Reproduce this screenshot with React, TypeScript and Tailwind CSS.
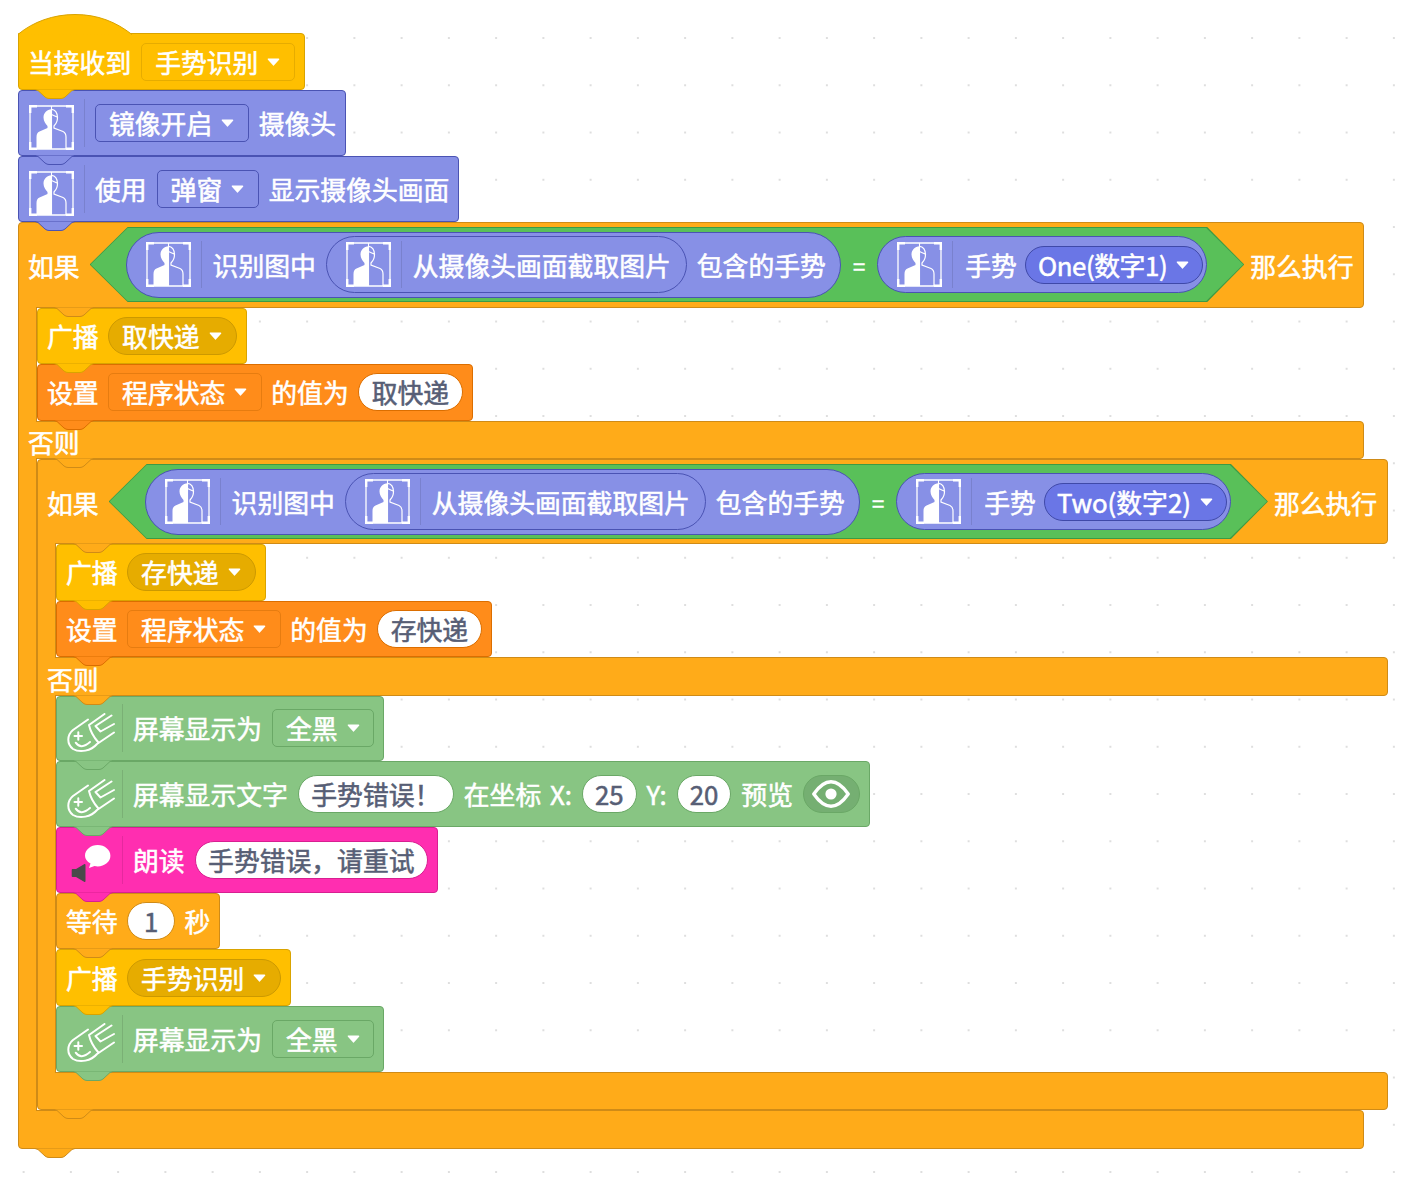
import React from 'react';

type Tone = 'event' | 'control' | 'data' | 'camera' | 'screen' | 'speech';

const tones: Record<Tone, { box: string; fill: string; line: string; drop: string; pill: string }> = {
  event: { box: 'bg-[#ffbf00] border-[#d9a300]', fill: 'fill-[#ffbf00]', line: 'stroke-[#d9a300]', drop: 'bg-[#ffbf00] border-[#e6ac00]', pill: 'border-[#cc9900]' },
  control: { box: 'bg-[#ffab19] border-[#cf8b17]', fill: 'fill-[#ffab19]', line: 'stroke-[#cf8b17]', drop: 'bg-[#ffab19] border-[#cf8b17]', pill: 'border-[#cf8b17]' },
  data: { box: 'bg-[#ff8c1a] border-[#db6e00]', fill: 'fill-[#ff8c1a]', line: 'stroke-[#db6e00]', drop: 'bg-[#ff8c1a] border-[#e67c10]', pill: 'border-[#db6e00]' },
  camera: { box: 'bg-[#8790e6] border-[#4a53b3]', fill: 'fill-[#8790e6]', line: 'stroke-[#4a53b3]', drop: 'bg-[#8790e6] border-[#4a53b3]', pill: 'border-[#4a53b3]' },
  screen: { box: 'bg-[#88c583] border-[#6aa866]', fill: 'fill-[#88c583]', line: 'stroke-[#6aa866]', drop: 'bg-[#88c583] border-[#6aa866]', pill: 'border-[#6aa866]' },
  speech: { box: 'bg-[#ff2eb0] border-[#d81f91]', fill: 'fill-[#ff2eb0]', line: 'stroke-[#d81f91]', drop: 'bg-[#ff2eb0] border-[#d81f91]', pill: 'border-[#d81f91]' },
};

const Tab: React.FC<{ tone: Tone; at?: string }> = ({ tone, at = 'left-[16px]' }) => (
  <svg width="40" height="11" viewBox="0 0 40 11" className={`absolute top-full z-10 ${at}`}>
    <path d="M0 0.5 L3 1.5 L10 8 Q12 9.5 14 9.5 H26 Q28 9.5 30 8 L37 1.5 L40 0.5" className={`${tones[tone].fill} ${tones[tone].line}`} strokeWidth="1" />
  </svg>
);

const Arrow = () => (
  <svg width="13" height="8" viewBox="0 0 13 8" className="shrink-0">
    <path d="M1.5 1.2 H11.5 L6.5 6.8 Z" fill="#fff" stroke="#fff" strokeWidth="1.6" strokeLinejoin="round" />
  </svg>
);

const Drop: React.FC<{ tone: Tone; label: string }> = ({ tone, label }) => (
  <div className={`flex items-center shrink-0 h-[38px] pl-[13px] pr-[13.5px] gap-[9px] rounded-[5px] border ${tones[tone].drop}`}>
    <span>{label}</span>
    <Arrow />
  </div>
);

const BroadcastPill: React.FC<{ label: string }> = ({ label }) => (
  <div className="flex items-center shrink-0 h-[38px] pl-[13px] pr-[14px] gap-[9px] rounded-full border bg-[#e6ac00] border-[#cc9900]">
    <span>{label}</span>
    <Arrow />
  </div>
);

const Value: React.FC<{ tone: Tone; label: string; w?: string }> = ({ tone, label, w = 'px-[12.5px]' }) => (
  <div className={`flex items-center justify-center shrink-0 h-[38px] rounded-full bg-white text-[#575e75] border ${tones[tone].pill} ${w}`}>{label}</div>
);

const PersonIcon = () => (
  <svg width="45" height="45" viewBox="0 0 45 45" className="shrink-0">
    <g fill="none" stroke="#fff">
      <path d="M1 1 H44 V44 H1 Z" strokeWidth="1.3" />
      <path d="M1 8 V1 H8 M37 1 H44 V8 M44 37 V44 H37 M8 44 H1 V37" strokeWidth="2.8" />
      <path d="M22.5 1 V44" strokeWidth="1.1" />
      <path d="M22.5 4.3 C26 4.3 28.5 8 28.5 12.5 C28.5 16 27 19 25 21 V23 L34 26.5 C36 27.5 37 29 37 32 V44 M22.5 9.5 L28 12" strokeWidth="1.2" />
    </g>
    <path d="M22.5 4.3 C18 4.3 14.5 8 14.5 12.5 C14.5 16 16.5 19 18.5 21 V23 L10.5 26.5 C8.5 27.5 7.5 29 7.5 32 V44 H22.5 Z" fill="#fff" />
  </svg>
);

const CometIcon = () => (
  <svg width="48" height="40" viewBox="0 0 48 40" className="shrink-0" fill="none" stroke="#fff" strokeWidth="2" strokeLinecap="round" strokeLinejoin="round">
    <path d="M21 6.5 L6 17 C0 22 -0.5 31 6 36 C13 40 24 38 30 31 L47 19.5" />
    <path d="M37.5 1 L22 12 Q24 21 31 29" />
    <path d="M44.5 2.5 L28.5 13 L33.5 18.5 L47 11" />
    <path d="M7.5 23 H15 M11.3 19.3 V26.7" />
    <path d="M8.7 29.7 Q14 37 23 29" />
  </svg>
);

const SpeechIcon = () => (
  <svg width="40" height="38" viewBox="0 0 40 38" className="shrink-0 ml-[4px]">
    <path d="M26.7 0 C33.7 0 39.4 4.8 39.4 10.7 C39.4 16.6 33.7 21.4 26.7 21.4 C25.6 21.4 24.5 21.3 23.5 21 L18 23 L19.5 18.5 C16 16.6 14 13.8 14 10.7 C14 4.8 19.7 0 26.7 0 Z" fill="#fff" />
    <path d="M1.5 24 H5 L13.5 19 Q14.5 18.8 14.5 20 V36 Q14.5 37.2 13.5 37 L5 32 H1.5 Q0.7 32 0.7 31 V25 Q0.7 24 1.5 24 Z" fill="#4a4a4a" />
  </svg>
);

const EyeIcon = () => (
  <svg width="38" height="28" viewBox="0 0 38 28" className="shrink-0" fill="none" stroke="#fff">
    <path d="M1.8 14 C8 5 13.5 1.8 19 1.8 C24.5 1.8 30 5 36.2 14 C30 23 24.5 26.2 19 26.2 C13.5 26.2 8 23 1.8 14 Z" strokeWidth="3.4" strokeLinejoin="round" />
    <circle cx="19" cy="14" r="5.6" fill="#fff" stroke="none" />
  </svg>
);

const Plain: React.FC<{ tone: Tone; children: React.ReactNode }> = ({ tone, children }) => (
  <div className={`relative flex items-center shrink-0 h-[56.5px] border rounded-[4px] pl-[9px] pr-[9px] gap-[9.5px] ${tones[tone].box}`}>
    {children}
    <Tab tone={tone} />
  </div>
);

const WithIcon: React.FC<{ tone: Tone; icon: React.ReactNode; children: React.ReactNode }> = ({ tone, icon, children }) => (
  <div className={`relative flex items-center shrink-0 h-[65.75px] border rounded-[4px] pr-[9px] ${tones[tone].box}`}>
    <div className="flex items-center shrink-0 h-[48px] w-[66px] pl-[10px] border-r border-black/10">
      <div className="mt-[9px]">{icon}</div>
    </div>
    <div className="flex items-center gap-[10px] ml-[10px]">{children}</div>
    <Tab tone={tone} />
  </div>
);

const Reporter: React.FC<{ size: string; pr: string; children: React.ReactNode }> = ({ size, pr, children }) => (
  <div className={`flex items-center shrink-0 rounded-full border bg-[#8790e6] border-[#4a53b3] ${size} ${pr}`}>
    <div className="flex items-center shrink-0 h-[47px] w-[75px] pl-[19px] border-r border-black/10">
      <PersonIcon />
    </div>
    <div className="flex items-center gap-[10px] ml-[11px]">{children}</div>
  </div>
);

const Condition: React.FC<{ gesture: string; track: string }> = ({ gesture, track }) => (
  <div className="shrink-0 h-[75px] bg-[#3d9a45] p-px [clip-path:polygon(38px_0,calc(100%-37px)_0,100%_50%,calc(100%-37px)_100%,38px_100%,0_50%)]">
    <div className="flex items-center h-full pl-[35px] pr-[36px] bg-[#59c059] [clip-path:polygon(37px_0,calc(100%-37px)_0,100%_50%,calc(100%-37px)_100%,37px_100%,0_50%)]">
      <Reporter size="h-[66px]" pr="pr-[14px]">
        <span>识别图中</span>
        <Reporter size="h-[57px]" pr="pr-[15px]">
          <span>从摄像头画面截取图片</span>
        </Reporter>
        <span>包含的手势</span>
      </Reporter>
      <span className="w-[36.5px] text-center text-[22px]">=</span>
      <Reporter size="h-[57px]" pr="pr-[3px]">
        <span className="ml-px">手势</span>
        <div className="flex items-center h-[38px] -ml-[2px] pl-[12px] pr-[13px] gap-[9px] rounded-full border bg-[#6a76e6] border-[#3f49a8]">
          <span className={track}>{gesture}</span>
          <Arrow />
        </div>
      </Reporter>
    </div>
  </div>
);

const Arm = ({ children }: { children: React.ReactNode }) => (
  <div className="flex items-stretch">
    <div className="relative z-[1] -my-px w-[19px] shrink-0 bg-[#ffab19] border-x border-[#cf8b17]" />
    <div className="flex flex-col items-start">{children}</div>
  </div>
);

const IfElse: React.FC<{
  width: string;
  headH: string;
  gesture: string;
  track: string;
  then: React.ReactNode;
  otherwise: React.ReactNode;
}> = ({ width, headH, gesture, track, then, otherwise }) => {
  const edge = 'relative border bg-[#ffab19] border-[#cf8b17]';
  return (
    <div className="flex flex-col items-start shrink-0">
      <div className={`${edge} flex items-center pl-[9px] gap-[10px] rounded-[4px] rounded-bl-none ${width} ${headH}`}>
        <span className="mt-[3px]">如果</span>
        <Condition gesture={gesture} track={track} />
        <span className="-ml-[4px] mt-[3px]">那么执行</span>
        <Tab tone="control" at="left-[35px]" />
      </div>
      <Arm>{then}</Arm>
      <div className={`${edge} flex items-center pl-[9px] pt-[5px] h-[38.5px] rounded-r-[4px] ${width}`}>
        <span>否则</span>
        <Tab tone="control" at="left-[35px]" />
      </div>
      <Arm>{otherwise}</Arm>
      <div className={`${edge} h-[38.5px] rounded-[4px] rounded-tl-none ${width}`}>
        <Tab tone="control" />
      </div>
    </div>
  );
};

const Broadcast: React.FC<{ label: string }> = ({ label }) => (
  <Plain tone="event">
    <span>广播</span>
    <BroadcastPill label={label} />
  </Plain>
);

const SetStatus: React.FC<{ value: string }> = ({ value }) => (
  <Plain tone="data">
    <span>设置</span>
    <Drop tone="data" label="程序状态" />
    <span>的值为</span>
    <Value tone="data" label={value} />
  </Plain>
);

const BlackScreen = () => (
  <WithIcon tone="screen" icon={<CometIcon />}>
    <span>屏幕显示为</span>
    <Drop tone="screen" label="全黑" />
  </WithIcon>
);

export default function App() {
  return (
    <div className="w-[1420px] h-[1181px] overflow-hidden bg-white bg-[radial-gradient(circle,#dedede_1px,transparent_1.2px)] bg-[size:47.25px_47.25px] bg-[position:0px_14.4px] font-['Noto_Sans_CJK_SC',sans-serif] text-[25.8px] leading-none whitespace-nowrap text-white [-webkit-text-stroke:0.55px_currentColor]">
      <div className="flex flex-col items-start pl-[18px] pt-[33px]">
        <div className="relative flex items-center shrink-0 h-[57px] border rounded-[4px] rounded-tl-none pl-[9px] pr-[9px] gap-[10px] bg-[#ffbf00] border-[#d9a300]">
          <svg width="115" height="21" viewBox="0 0 115 21" className="absolute -left-px bottom-full -mb-[1px]">
            <path d="M0.5 20 C15 8 35 0.5 57 0.5 C80 0.5 98 8 114 20.5" fill="#ffbf00" stroke="#d9a300" />
          </svg>
          <span>当接收到</span>
          <Drop tone="event" label="手势识别" />
          <Tab tone="event" />
        </div>

        <WithIcon tone="camera" icon={<PersonIcon />}>
          <Drop tone="camera" label="镜像开启" />
          <span>摄像头</span>
        </WithIcon>

        <WithIcon tone="camera" icon={<PersonIcon />}>
          <span>使用</span>
          <Drop tone="camera" label="弹窗" />
          <span>显示摄像头画面</span>
        </WithIcon>

        <IfElse
          width="w-[1346px]"
          headH="h-[86px]"
          gesture="One(数字1)"
          track="tracking-[-0.4px]"
          then={
            <>
              <Broadcast label="取快递" />
              <SetStatus value="取快递" />
            </>
          }
          otherwise={
            <IfElse
              width="w-[1351px]"
              headH="h-[85px]"
              gesture="Two(数字2)"
              track="tracking-normal"
              then={
                <>
                  <Broadcast label="存快递" />
                  <SetStatus value="存快递" />
                </>
              }
              otherwise={
                <>
                  <BlackScreen />
                  <WithIcon tone="screen" icon={<CometIcon />}>
                    <span>屏幕显示文字</span>
                    <Value tone="screen" label="手势错误！" />
                    <span className="[word-spacing:3px]">在坐标 X:</span>
                    <Value tone="screen" label="25" w="px-[12px]" />
                    <span>Y:</span>
                    <Value tone="screen" label="20" w="px-[12px]" />
                    <span>预览</span>
                    <div className="flex items-center justify-center w-[57px] h-[38px] rounded-full border bg-[#75af72] border-[#6aa866]">
                      <EyeIcon />
                    </div>
                  </WithIcon>
                  <WithIcon tone="speech" icon={<SpeechIcon />}>
                    <span>朗读</span>
                    <Value tone="speech" label="手势错误，请重试" />
                  </WithIcon>
                  <Plain tone="control">
                    <span>等待</span>
                    <Value tone="control" label="1" w="w-[48px]" />
                    <span>秒</span>
                  </Plain>
                  <Broadcast label="手势识别" />
                  <BlackScreen />
                </>
              }
            />
          }
        />
      </div>
    </div>
  );
}
